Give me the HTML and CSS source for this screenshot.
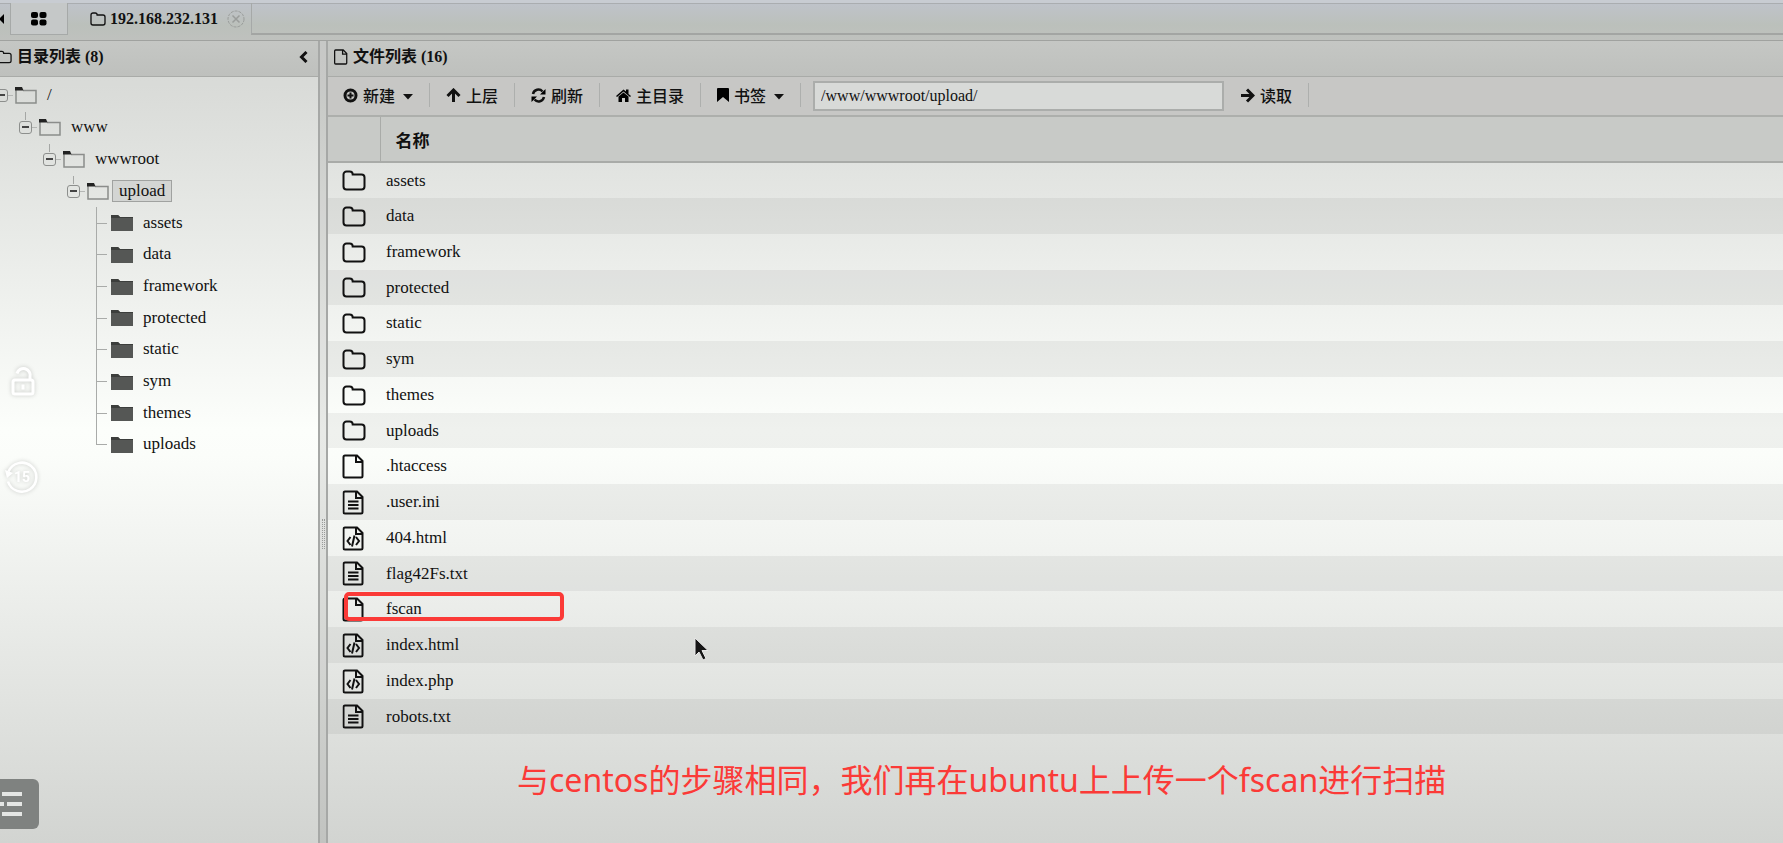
FILE: index.html
```html
<!DOCTYPE html>
<html lang="zh-CN">
<head>
    <meta charset="UTF-8">
    <meta name="viewport" content="width=device-width, initial-scale=1.0">
    <title>192.168.232.131</title>
    <link rel="stylesheet" href="styles.css">
</head>
<body>
    <!-- Icons -->
    <svg class="sprite" aria-hidden="true">
        <symbol id="i-folder" viewBox="0 0 24 21">
            <path d="M1.5 4.5a3 3 0 0 1 3-3h3.2a3 3 0 0 1 3 3h8.8a3 3 0 0 1 3 3v9a3 3 0 0 1-3 3h-15a3 3 0 0 1-3-3z" fill="none" stroke="currentColor" stroke-width="2"/>
        </symbol>
        <symbol id="i-file" viewBox="0 0 22 25">
            <path d="M2.5 1.5h12l5.500 5.500v15q0 1.500-1.500 1.500h-16q-1.500 0-1.500-1.500v-19q0-1.500 1.500-1.500zM13.500 1.500v6.500h6.500" fill="none" stroke="currentColor" stroke-width="2"/>
        </symbol>
        <symbol id="i-text" viewBox="0 0 22 25">
            <use href="#i-file"/>
            <path d="M5.500 11.500h10.500M5.500 15h10.500M5.500 18.500h10.500" stroke="currentColor" stroke-width="2"/>
        </symbol>
        <symbol id="i-code" viewBox="0 0 22 25">
            <use href="#i-file"/>
            <path d="M8 11l-3 4 3 4M13.500 11l3 4-3 4M12 9.500l-2.500 11" fill="none" stroke="currentColor" stroke-width="2"/>
        </symbol>
        <symbol id="i-open" viewBox="0 0 22 17">
            <path d="M1 2v14h20v-12.500h-13" fill="none" stroke="#8b8d8b" stroke-width="1.500"/>
            <path d="M0 0h7l1.500 3.500h-8.500z" fill="#222"/>
        </symbol>
        <symbol id="i-dir" viewBox="0 0 22 17">
            <path d="M0 1h7l2 2h13v14h-22z" fill="#555755"/>
            <path d="M0 1h7l2 2h13v1h-22z" fill="#3c3e3c"/>
        </symbol>
        <symbol id="i-caret" viewBox="0 0 10 6">
            <path d="M0 0h10l-5 5.500z" fill="currentColor"/>
        </symbol>
    </svg>

    <nav class="tabs">
        <button class="tab-scroll" aria-label="向左"><svg width="4" height="10" viewBox="0 0 4 10"><path d="M4 0v10l-5-5z"/></svg></button>
        <button class="tab tab-home" aria-label="主页">
            <svg width="16" height="14" viewBox="0 0 16 14"><rect width="7" height="6" rx="2"/><rect x="8.500" width="7" height="6" rx="2"/><rect y="7.500" width="7" height="6" rx="2"/><rect x="8.500" y="7.500" width="7" height="6" rx="2"/></svg>
        </button>
        <div class="tab-active">
            <svg width="16" height="14"><use href="#i-folder"/></svg>
            <a href="#files">192.168.232.131</a>
            <button class="tab-close" aria-label="关闭"><svg width="18" height="18" viewBox="0 0 18 18" fill="none" stroke="#9a9d9b"><circle cx="9" cy="9" r="8" stroke-dasharray="3 1"/><path d="M5.500 5.500l7 7M12.500 5.500l-7 7" stroke-width="1.500"/></svg></button>
        </div>
        <div class="tab-rest"></div>
    </nav>

    <div class="workspace">
        <aside class="panel-dirs">
            <header class="panel-head">
                <svg class="head-folder" width="15" height="14"><use href="#i-folder"/></svg>
                <h2>目录列表 (8)</h2>
                <button class="collapse" aria-label="折叠"><svg width="9" height="12" viewBox="0 0 9 12"><path d="M7.500 1l-5 5 5 5" fill="none" stroke="#111" stroke-width="3"/></svg></button>
            </header>

            <ul class="tree">
                <li>
                    <div class="node"><button class="toggle" aria-label="折叠 /"></button><svg class="dir"><use href="#i-open"/></svg><span>/</span></div>
                    <ul>
                        <li>
                            <div class="node"><button class="toggle" aria-label="折叠 www"></button><svg class="dir"><use href="#i-open"/></svg><span>www</span></div>
                            <ul>
                                <li>
                                    <div class="node"><button class="toggle" aria-label="折叠 wwwroot"></button><svg class="dir"><use href="#i-open"/></svg><span>wwwroot</span></div>
                                    <ul>
                                        <li>
                                            <div class="node"><button class="toggle" aria-label="折叠 upload"></button><svg class="dir"><use href="#i-open"/></svg><span class="selected">upload</span></div>
                                            <ul class="leaves">
                                                <li class="node"><svg class="dir"><use href="#i-dir"/></svg><span>assets</span></li>
                                                <li class="node"><svg class="dir"><use href="#i-dir"/></svg><span>data</span></li>
                                                <li class="node"><svg class="dir"><use href="#i-dir"/></svg><span>framework</span></li>
                                                <li class="node"><svg class="dir"><use href="#i-dir"/></svg><span>protected</span></li>
                                                <li class="node"><svg class="dir"><use href="#i-dir"/></svg><span>static</span></li>
                                                <li class="node"><svg class="dir"><use href="#i-dir"/></svg><span>sym</span></li>
                                                <li class="node"><svg class="dir"><use href="#i-dir"/></svg><span>themes</span></li>
                                                <li class="node"><svg class="dir"><use href="#i-dir"/></svg><span>uploads</span></li>
                                            </ul>
                                        </li>
                                    </ul>
                                </li>
                            </ul>
                        </li>
                    </ul>
                </li>
            </ul>
        </aside>

        <div class="splitter"><i></i></div>

        <main class="panel-files" id="files">
            <header class="panel-head">
                <svg width="14" height="16"><use href="#i-file"/></svg>
                <h2>文件列表 (16)</h2>
            </header>

            <div class="toolbar">
                <button class="tool"><svg width="15" height="15" viewBox="0 0 15 15"><circle cx="7.500" cy="7.500" r="5.500" fill="none" stroke="#111" stroke-width="3"/><path d="M7.500 4.500v6M4.500 7.500h6" stroke="#111" stroke-width="2"/></svg>新建<svg class="caret"><use href="#i-caret"/></svg></button>
                <button class="tool"><svg width="15" height="15" viewBox="0 0 15 15"><path d="M7.500 14v-11M1.500 8l6-6 6 6" fill="none" stroke="#111" stroke-width="3"/></svg>上层</button>
                <button class="tool"><svg width="15" height="15" viewBox="0 0 15 15"><path d="M2 6a5.500 5.500 0 0 1 9.500-2.500M13 9a5.500 5.500 0 0 1-9.500 2.500" fill="none" stroke="#111" stroke-width="2.500"/><path d="M14.500 1v5.500h-5.500zM.5 14v-5.500h5.500z"/></svg>刷新</button>
                <button class="tool"><svg width="15" height="15" viewBox="0 0 15 15"><path d="M0 8l7.500-6.500 2.500 2v-2h2.500v4.500l2.500 2-1 1-6.500-5.500-6.500 5.500zM2.500 8.500l5-4 5 4v5.500h-3.500v-4h-3v4h-3.500z"/></svg>主目录</button>
                <button class="tool"><svg width="12" height="14" viewBox="0 0 12 14"><path d="M0 1q0-1 1-1h10q1 0 1 1v13l-6-5-6 5z"/></svg>书签<svg class="caret"><use href="#i-caret"/></svg></button>
                <input class="path" type="text" value="/www/wwwroot/upload/" aria-label="路径">
                <button class="tool"><svg width="15" height="15" viewBox="0 0 15 15"><path d="M1 7.500h11M7 1.500l6 6-6 6" fill="none" stroke="#111" stroke-width="3"/></svg>读取</button>
            </div>

            <table class="files">
                <thead>
                    <tr><th class="col-icon"></th><th class="col-name">名称</th></tr>
                </thead>
                <tbody>
                    <tr><td class="icon"><svg class="folder"><use href="#i-folder"/></svg></td><td>assets</td></tr>
                    <tr><td class="icon"><svg class="folder"><use href="#i-folder"/></svg></td><td>data</td></tr>
                    <tr><td class="icon"><svg class="folder"><use href="#i-folder"/></svg></td><td>framework</td></tr>
                    <tr><td class="icon"><svg class="folder"><use href="#i-folder"/></svg></td><td>protected</td></tr>
                    <tr><td class="icon"><svg class="folder"><use href="#i-folder"/></svg></td><td>static</td></tr>
                    <tr><td class="icon"><svg class="folder"><use href="#i-folder"/></svg></td><td>sym</td></tr>
                    <tr><td class="icon"><svg class="folder"><use href="#i-folder"/></svg></td><td>themes</td></tr>
                    <tr><td class="icon"><svg class="folder"><use href="#i-folder"/></svg></td><td>uploads</td></tr>
                    <tr><td class="icon"><svg class="file"><use href="#i-file"/></svg></td><td>.htaccess</td></tr>
                    <tr><td class="icon"><svg class="file"><use href="#i-text"/></svg></td><td>.user.ini</td></tr>
                    <tr><td class="icon"><svg class="file"><use href="#i-code"/></svg></td><td>404.html</td></tr>
                    <tr><td class="icon"><svg class="file"><use href="#i-text"/></svg></td><td>flag42Fs.txt</td></tr>
                    <tr><td class="icon"><svg class="file"><use href="#i-file"/></svg><div class="mark"></div></td><td>fscan</td></tr>
                    <tr><td class="icon"><svg class="file"><use href="#i-code"/></svg></td><td>index.html</td></tr>
                    <tr><td class="icon"><svg class="file"><use href="#i-code"/></svg></td><td>index.php</td></tr>
                    <tr><td class="icon"><svg class="file"><use href="#i-text"/></svg></td><td>robots.txt</td></tr>
                </tbody>
            </table>
        </main>
    </div>

    <!-- Player controls, caption and mouse pointer over the page -->
    <button class="lock" aria-label="锁定"><svg width="24" height="32" viewBox="0 0 24 32" fill="none" stroke="#fff" stroke-width="3"><rect x="2" y="15" width="20" height="14" rx="2"/><path d="M6 8.500a6.500 6.500 0 1 1 13 3.500v3M12 19.500v5"/></svg></button>
    <button class="rewind" aria-label="后退 15 秒"><svg width="34" height="34" viewBox="0 0 34 34"><path d="M3.500 11.500a14.500 14.500 0 1 1-.5 10" fill="none" stroke="#fff" stroke-width="2.500"/><path d="M0 10l8 3-6 5z" fill="#fff"/></svg><span>15</span></button>
    <button class="playlist" aria-label="列表"><svg width="24" height="26" viewBox="0 0 24 26" stroke="#e4e6e4" stroke-width="4"><path d="M2 3h20M7 13h15M2 23h20M0 13h4"/></svg></button>
    <p class="caption">与centos的步骤相同，我们再在ubuntu上上传一个fscan进行扫描</p>
    <svg class="pointer" width="15" height="25" viewBox="0 0 15 25"><path d="M1 1v18l4-4 4 8 3-1.500-4-8h6z" fill="#161616" stroke="#e8e8e8"/></svg>
</body>
</html>
```
FILE: styles.css
```css
* {
    box-sizing: border-box;
}

body {
    display: flex;
    flex-direction: column;
    min-height: 100vh;
    margin: 0;
    position: relative;
    overflow: hidden;
    font-family: "Liberation Serif", "Noto Sans CJK SC", serif;
    font-size: 16px;
    color: #111;
    background: linear-gradient(#d6d8d6 0, #d9dbd8 10%, #fcfefb 51%, #fbfdfa 54%, #d2d4d1 100%);
}

button {
    margin: 0;
    padding: 0;
    border: none;
    background: none;
    font: inherit;
    color: inherit;
    cursor: pointer;
}

ul {
    list-style: none;
    margin: 0;
    padding: 0;
}

svg {
    flex: none;
    display: block;
}

.sprite {
    position: absolute;
    width: 0;
    height: 0;
}

/* Tabs */
.tabs {
    display: flex;
    height: 41px;
    padding-bottom: 5px;
    border-top: 3px solid #c8ccd2;
    border-bottom: 1px solid #a0a29f;
    background: linear-gradient(#bfc3ca, #bbc0bb 60%, #bfc1be);
    box-shadow: inset 0 1px #aaadb0;
}

.tab-scroll {
    width: 10px;
}

.tab-home {
    width: 58px;
    display: flex;
    align-items: center;
    justify-content: center;
    border: 1px solid #a6a9a8;
    border-top: none;
    background: #c5c8c8;
}

.tab-active {
    display: flex;
    align-items: center;
    gap: 4px;
    width: 183px;
    padding-left: 22px;
    font-weight: bold;
}

.tab-active a {
    color: inherit;
    text-decoration: none;
}

.tab-close {
    margin-left: auto;
    margin-right: 6px;
}

.tab-rest {
    flex: 1;
    border-left: 1px solid #a6a9a8;
    border-bottom: 2px solid #a3a5a3;
}

/* Panels */
.workspace {
    flex: 1;
    display: flex;
}

.panel-dirs {
    width: 318px;
}

.panel-files {
    flex: 1;
}

.panel-head {
    display: flex;
    align-items: center;
    gap: 5px;
    height: 36px;
    padding: 0 10px 4px 6px;
    border-bottom: 1px solid #a9aba8;
    background: linear-gradient(#c5c7c4, #bec0bd);
}

.panel-head h2 {
    margin: 0;
    font-size: 16px;
    line-height: 24px;
    font-weight: bold;
}

.panel-dirs .panel-head {
    padding-left: 0;
}

.head-folder {
    margin-left: -3px;
}

.collapse {
    margin-left: auto;
}

.splitter {
    display: flex;
    align-items: center;
    justify-content: center;
    width: 10px;
    border: solid #a6a8a6;
    border-width: 0 2px;
    background: rgba(0, 0, 0, 0.08);
}

.splitter i {
    width: 3px;
    height: 30px;
    margin-top: 184px;
    border: dotted #999b99;
    border-width: 0 1px;
}

/* Directory tree */
.tree {
    margin-left: -5px;
    padding-top: 2px;
    font-size: 17px;
}

.tree ul {
    padding-left: 24px;
}

.node {
    display: flex;
    align-items: center;
    height: 32px;
    position: relative;
}

.node span {
    padding: 0 6px;
    margin-left: 3px;
    border: 1px solid transparent;
    line-height: 20px;
}

.node .selected {
    border-color: #a0a2a0;
    background: #d3d5d3;
}

.dir {
    width: 22px;
    height: 17px;
}

.toggle {
    width: 13px;
    height: 13px;
    margin-right: 7px;
    border: 1px solid #8d8f8d;
    border-radius: 3px;
    background: linear-gradient(#444, #444) center / 7px 2px no-repeat;
}

.toggle::after {
    content: "";
    position: absolute;
    left: 13px;
    top: 16px;
    width: 5px;
    border-top: 1px solid #b5b7b5;
}

.tree ul .toggle::before {
    content: "";
    position: absolute;
    left: 6px;
    top: 1px;
    height: 8px;
    border-left: 1px solid #a5a7a5;
}

.leaves .node {
    padding-left: 20px;
}

.leaves .node:nth-child(3n + 1) {
    height: 31px;
}

.leaves .node::before {
    content: "";
    position: absolute;
    left: 5px;
    top: 0;
    height: 32px;
    border-left: 1px solid #a9aba9;
}

.leaves .node:last-child::before {
    height: 16px;
}

.leaves .node::after {
    content: "";
    position: absolute;
    left: 5px;
    top: 16px;
    width: 11px;
    border-top: 1px solid #a9aba9;
}

/* Toolbar */
.toolbar {
    display: flex;
    align-items: center;
    height: 40px;
    padding-bottom: 2px;
    border-bottom: 2px solid #adafac;
    background: #c7c7c5;
}

.tool {
    display: flex;
    align-items: center;
    gap: 5px;
    height: 24px;
    padding: 0 16px;
    border-right: 1px solid #adafad;
    font-weight: 500;
}

.tool:first-child {
    padding-left: 15px;
}

.caret {
    width: 10px;
    height: 6px;
    margin: 3px 0 0 3px;
}

.path {
    width: 411px;
    height: 30px;
    margin: 1px 0 0 12px;
    padding: 0 6px;
    border: 2px solid #abadab;
    border-radius: 0;
    outline: none;
    background: #d8dad8;
    font: inherit;
    color: inherit;
}

/* File list */
.files {
    width: 100%;
    border-collapse: collapse;
    font-size: 17px;
}

.files th {
    height: 45px;
    padding: 0 15px;
    border-bottom: 2px solid #a9aba8;
    background: #c8cac7;
    font-size: 17px;
    text-align: left;
}

.files .col-icon {
    width: 52px;
    border-right: 1px solid #a9aba8;
}

.files td {
    height: 36px;
    padding: 0 6px;
}

.files tr:nth-child(4n) td {
    height: 35px;
}

.files tbody tr:nth-child(even) td {
    background: rgba(0, 0, 0, 0.05);
}

.files .icon {
    position: relative;
    padding: 0 0 0 14px;
}

.folder {
    width: 24px;
    height: 21px;
}

.file {
    width: 23px;
    height: 25px;
}

.mark {
    position: absolute;
    left: 16px;
    top: 1px;
    width: 220px;
    height: 29px;
    border: 4px solid #fb3a37;
    border-radius: 5px;
}

/* Overlays */
.lock,
.rewind,
.playlist,
.caption,
.pointer {
    position: absolute;
}

.lock {
    left: 11px;
    top: 365px;
    filter: drop-shadow(0 0 2px rgba(0, 0, 0, 0.2));
}

.rewind {
    left: 5px;
    top: 460px;
    filter: drop-shadow(0 0 2px rgba(0, 0, 0, 0.2));
}

.rewind span {
    position: absolute;
    inset: 0;
    font: bold 14px/34px Roboto, sans-serif;
    color: #fff;
}

.playlist {
    left: 0;
    top: 779px;
    width: 39px;
    height: 50px;
    border-radius: 0 6px 6px 0;
    background: #7f8280;
}

.caption {
    left: 517px;
    top: 758px;
    margin: 0;
    font-family: "Noto Sans", "Noto Sans CJK SC", sans-serif;
    font-size: 32px;
    line-height: 44px;
    white-space: nowrap;
    color: #fb3a37;
}

.pointer {
    left: 694px;
    top: 637px;
}
```
